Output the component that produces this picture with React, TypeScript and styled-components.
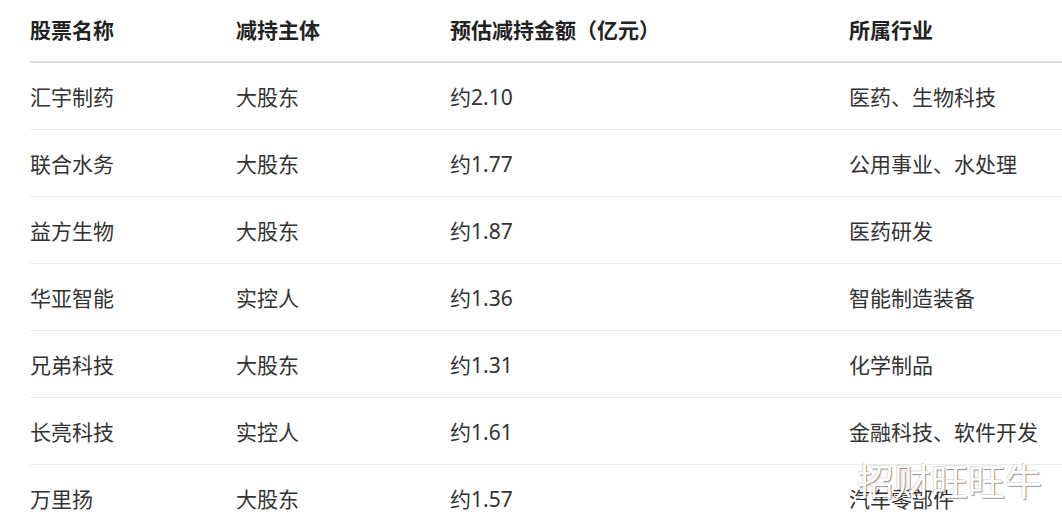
import styled, { createGlobalStyle } from "styled-components";

const GlobalStyle = createGlobalStyle`
  body {
    margin: 0;
    background: #ffffff;
    font-family: "Noto Sans", "Noto Sans CJK SC", sans-serif;
  }
`;

const rows = [
  { name: "汇宇制药", holder: "大股东", amount: "约2.10", industry: "医药、生物科技" },
  { name: "联合水务", holder: "大股东", amount: "约1.77", industry: "公用事业、水处理" },
  { name: "益方生物", holder: "大股东", amount: "约1.87", industry: "医药研发" },
  { name: "华亚智能", holder: "实控人", amount: "约1.36", industry: "智能制造装备" },
  { name: "兄弟科技", holder: "大股东", amount: "约1.31", industry: "化学制品" },
  { name: "长亮科技", holder: "实控人", amount: "约1.61", industry: "金融科技、软件开发" },
  { name: "万里扬", holder: "大股东", amount: "约1.57", industry: "汽车零部件" },
];

function App() {
  return (
    <Page>
      <GlobalStyle />
      <Table>
        <colgroup>
          <col style={{ width: 206 }} />
          <col style={{ width: 214 }} />
          <col style={{ width: 399 }} />
          <col />
        </colgroup>
        <thead>
          <tr>
            <HeadCell>股票名称</HeadCell>
            <HeadCell>减持主体</HeadCell>
            <HeadCell>预估减持金额（亿元）</HeadCell>
            <HeadCell>所属行业</HeadCell>
          </tr>
        </thead>
        <tbody>
          {rows.map((r, i) => (
            <tr key={r.name}>
              <Cell last={i === rows.length - 1}>{r.name}</Cell>
              <Cell last={i === rows.length - 1}>{r.holder}</Cell>
              <Cell last={i === rows.length - 1}>{r.amount}</Cell>
              <Cell last={i === rows.length - 1}>{r.industry}</Cell>
            </tr>
          ))}
        </tbody>
      </Table>
      {/* watermark over the last row */}
      <Watermark>招财旺旺牛</Watermark>
    </Page>
  );
}

export default App;

const Page = styled.div`
  position: relative;
  width: 1062px;
  height: 523px;
  overflow: hidden;
  padding-left: 30px;
  box-sizing: border-box;
`;

const Table = styled.table`
  width: 1032px;
  border-collapse: collapse;
  table-layout: fixed;
`;

const HeadCell = styled.th`
  height: 62px;
  padding: 0 0 3px;
  box-sizing: border-box;
  text-align: left;
  vertical-align: middle;
  font-size: 21px;
  font-weight: 700;
  color: #222222;
  border-bottom: 2px solid #dedede;
  white-space: nowrap;
`;

const Cell = styled.td<{ last?: boolean }>`
  height: 67px;
  padding: 0;
  box-sizing: border-box;
  text-align: left;
  vertical-align: middle;
  font-size: 21px;
  color: #333333;
  border-bottom: ${(p) => (p.last ? "none" : "1px solid #ececec")};
  white-space: nowrap;
`;

const Watermark = styled.div`
  position: absolute;
  left: 857px;
  top: 456px;
  font-size: 37px;
  line-height: 48px;
  color: #ffffff;
  font-family: "Noto Sans CJK SC", sans-serif;
  text-shadow: 1px 1px 1px rgba(0, 0, 0, 0.45), -1px -1px 0 rgba(0, 0, 0, 0.15);
  pointer-events: none;
`;
